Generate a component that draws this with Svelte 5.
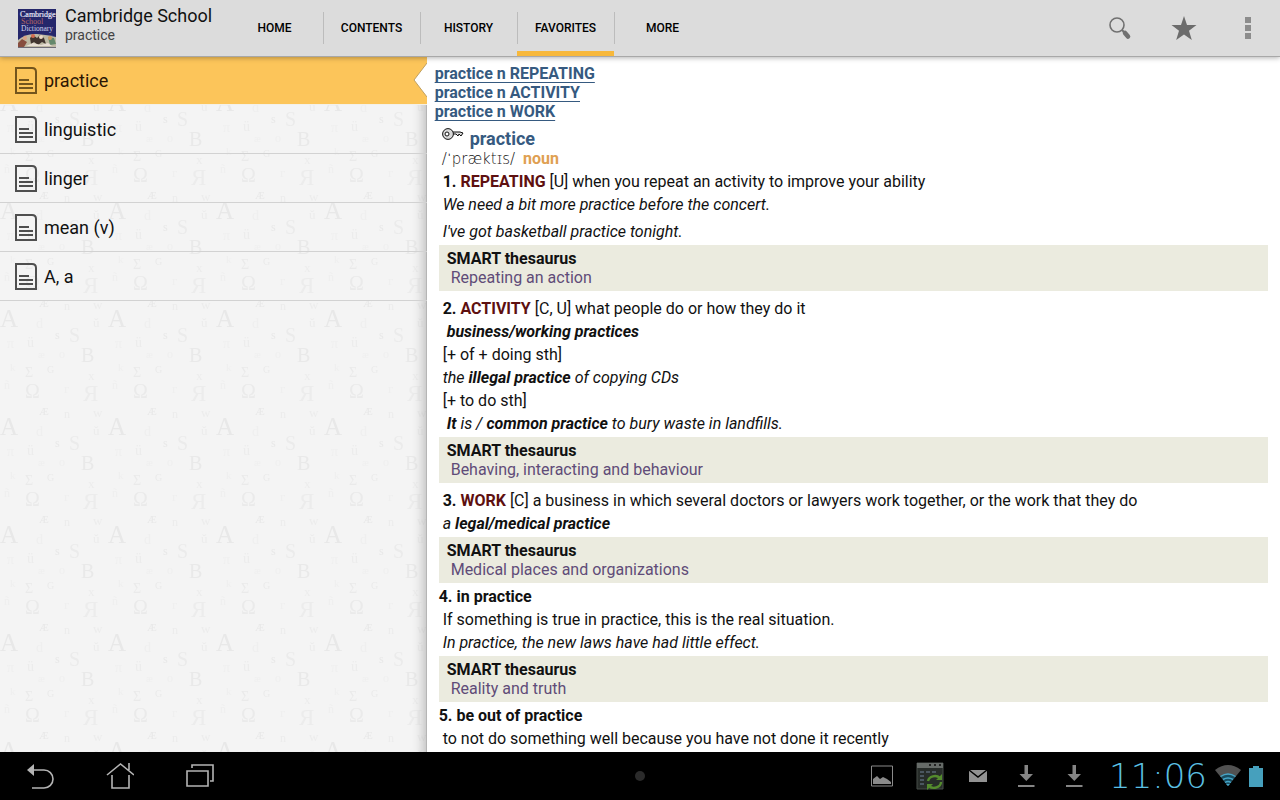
<script>
  const tabs = ['HOME', 'CONTENTS', 'HISTORY', 'FAVORITES', 'MORE'];
  const words = ['practice', 'linguistic', 'linger', 'mean (v)', 'A, a'];
  const sections = ['REPEATING', 'ACTIVITY', 'WORK'];
  let tab = $state('FAVORITES');
  let word = $state('practice');

  const glyphs = [
    ['A', 0, 27, 25, 0.05], ['S', 69, 42, 20, 0.035], ['B', 81, 62, 20, 0.045], ['Σ', 25, 77, 14, 0.04],
    ['Ω', 25, 98, 20, 0.04], ['Я', 83, 101, 23, 0.03], ['Æ', 39, 7, 11, 0.05], ['ü', 27, 47, 14, 0.03],
    ['s', 55, 39, 12, 0.05], ['G', 47, 73, 10, 0.04], ['w', 93, 9, 13, 0.03], ['ŭ', 93, 27, 13, 0.03],
    ['d', 36, 28, 14, 0.02], ['n', 64, 10, 12, 0.03], ['π', 7, 48, 14, 0.02], ['o', 59, 58, 12, 0.02],
    ['x', 88, 80, 13, 0.03], ['ñ', 4, 89, 12, 0.02], ['k', 10, 71, 11, 0.02], ['æ', 38, 58, 10, 0.02],
    ['г', 64, 93, 13, 0.02]
  ];
</script>

{#snippet thesaurus(topic)}
  <aside class="box">
    <h3>SMART thesaurus</h3>
    <a href="#topic">{topic}</a>
  </aside>
{/snippet}

<div class="page">
  <header>
    <div class="brand">
      <svg class="logo" viewBox="0 0 38 39" aria-hidden="true">
        <rect width="38" height="39" fill="#25276b" />
        <rect y="38" width="38" height="1" fill="#6f6b76" />
        <g font-family="Liberation Serif, serif">
          <text x="2" y="8" font-size="8" fill="#e4e4f4" stroke="#e4e4f4" stroke-width="0.2">Cambridge</text>
          <text x="3" y="15" font-size="8" fill="#b76560">School</text>
          <text x="3" y="22" font-size="7.5" fill="#d2d2ea">Dictionary</text>
        </g>
        <path d="M0 31Q8 24 19 25T38 28V38H0Z" fill="#bdb9a4" />
        <path d="M0 34l4-4 5 3-3 5H0z" fill="#874d3e" />
        <path d="M30 28l6 1 2 6-6 1z" fill="#64886c" />
        <path d="M12 29l3-3 4 3 3-3 4 3 2 6-4-2-4 3-4-3-3 2z" fill="#41342f" />
        <circle cx="7" cy="29" r="2" fill="#d9a184" /><circle cx="15" cy="27" r="2" fill="#d26b50" />
        <circle cx="23" cy="28" r="2" fill="#ecd9c2" /><circle cx="32" cy="29" r="2" fill="#cb9b62" />
        <path d="M8 37l7-3 8 2 7-2 4 3z" fill="#e8ded4" />
      </svg>
      <div>
        <h1>Cambridge School</h1>
        <p>practice</p>
      </div>
    </div>
    <nav class="tabs">
      {#each tabs as t}
        <button class:active={tab === t} onclick={() => (tab = t)}>{t}</button>
      {/each}
    </nav>
    <div class="actions">
      <button aria-label="Search">
        <svg viewBox="0 0 24 24"><circle cx="9" cy="9" r="7" fill="none" stroke="#707070" stroke-width="1.6" /><path d="M14 14l2 2" stroke="#707070" stroke-width="2" /><path d="M17 17l3 3.500" stroke="#707070" stroke-width="4.6" stroke-linecap="round" /></svg>
      </button>
      <button aria-label="Favorite">
        <svg class="star" viewBox="0 0 26 26"><path d="M13 1l3 9h9.500l-7.500 5.800 2.800 9.200-7.800-5.600L5.200 25 8 15.800.5 10H10z" fill="#6c6c6c" /></svg>
      </button>
      <button aria-label="More options">
        <svg viewBox="0 0 24 24"><path d="M9 1h6v6H9zM9 9h6v6H9zM9 17h6v6H9z" fill="#8c8c8c" /></svg>
      </button>
    </div>
  </header>

  <main>
    <section class="side" aria-label="Favorites">
      <svg class="paper" aria-hidden="true">
        <defs>
          <pattern id="letters" width="108" height="108" y="27" patternUnits="userSpaceOnUse">
            {#each glyphs as [g, x, y, size, alpha]}
              <text {x} {y} font-size={size} fill-opacity={alpha} font-family="Liberation Serif, serif">{g}</text>
            {/each}
          </pattern>
        </defs>
        <rect width="100%" height="100%" fill="url(#letters)" />
      </svg>
      <ul>
        {#each words as w}
          <li class:selected={word === w}>
            <button onclick={() => (word = w)}>
              <svg class="doc" viewBox="0 0 22 27" fill="none" stroke-width="2" aria-hidden="true"><path d="M1 1h16q4 0 4 4v21H1z" /><path d="M4 13h10M4 17h14M4 21h14" /></svg>
              {w}
            </button>
            {#if word === w}
              <svg class="notch" viewBox="0 0 14 34" aria-hidden="true"><path d="M14 0L1 17l13 17z" fill="#fff" /><path d="M14 0L1 17l13 17" fill="none" stroke="#bfa063" /></svg>
            {/if}
          </li>
        {/each}
      </ul>
    </section>

    <article>
      <nav class="links">
        {#each sections as s}
          <a href="#{s}">practice n {s}</a>
        {/each}
      </nav>
      <h2>
        <svg viewBox="0 0 22 14" aria-hidden="true"><path d="M10 5h8l3 1-2 3-2-2-1 2-2-2h-4" fill="#ddd" stroke="#111" stroke-width="1" /><circle cx="6" cy="7" r="5.400" fill="#d8d8d8" stroke="#111" /><circle cx="5" cy="7" r="2" fill="#fff" stroke="#111" /></svg>
        practice
      </h2>
      <p class="sound"><span>/ˈpræktɪs/</span> <b>noun</b></p>
      <p id="REPEATING"><b>1. <span class="sense">REPEATING</span></b> [U] when you repeat an activity to improve your ability</p>
      <p><i>We need a bit more practice before the concert.</i></p>
      <p class="spaced"><i>I've got basketball practice tonight.</i></p>
      {@render thesaurus('Repeating an action')}
      <p id="ACTIVITY" class="next"><b>2. <span class="sense">ACTIVITY</span></b> [C, U] what people do or how they do it</p>
      <p class="phrase"><i><b>business/working practices</b></i></p>
      <p>[+ of + doing sth]</p>
      <p><i>the <b>illegal practice</b> of copying CDs</i></p>
      <p>[+ to do sth]</p>
      <p class="phrase"><i><b>It</b> is / <b>common practice</b> to bury waste in landfills.</i></p>
      {@render thesaurus('Behaving, interacting and behaviour')}
      <p id="WORK" class="next"><b>3. <span class="sense">WORK</span></b> [C] a business in which several doctors or lawyers work together, or the work that they do</p>
      <p><i>a <b>legal/medical practice</b></i></p>
      {@render thesaurus('Medical places and organizations')}
      <h4>4. in practice</h4>
      <p>If something is true in practice, this is the real situation.</p>
      <p><i>In practice, the new laws have had little effect.</i></p>
      {@render thesaurus('Reality and truth')}
      <h4>5. be out of practice</h4>
      <p>to not do something well because you have not done it recently</p>
    </article>
  </main>

  <footer>
    <div class="keys">
      <button aria-label="Back"><svg viewBox="0 0 28 28"><path d="M7 8h11a8 8 0 0 1 0 18H6" fill="none" stroke="#b4b4b4" stroke-width="1.6" /><path d="M1 8l7-6v12z" fill="#b4b4b4" /></svg></button>
      <button aria-label="Home"><svg viewBox="0 0 28 28" fill="none" stroke="#b4b4b4" stroke-width="1.6"><path d="M1 13L14.500 2 28 13M6 13v13h17V13M23 8V1" /></svg></button>
      <button aria-label="Recent apps"><svg viewBox="0 0 28 28" fill="none" stroke="#b4b4b4" stroke-width="1.6"><path d="M1 9h21v15H1zM6 6V3h21v16h-3" /></svg></button>
    </div>
    <span class="dot"></span>
    <div class="status">
      <div class="notices">
        <svg viewBox="0 0 28 28"><path d="M3.500 4h21v20h-21z" fill="none" stroke="#8a8a8a" /><path d="M5 22v-5l4-3 3 3 3-2 4 2 4 3v2z" fill="#8a8a8a" /></svg>
        <svg viewBox="0 0 28 28"><path d="M1 1h26v26H1z" fill="#272c29" stroke="#464c48" /><path d="M1 1h26v5H1z" fill="#666b68" /><path d="M13 3h2M18 3h2M23 3h2" stroke="#222" stroke-width="2" /><path d="M4 10h4M10 10h4M16 10h4M4 14h4M4 18h4M4 22h4" stroke="#4b5660" stroke-width="2" /><path d="M12 19a7 6 0 0 1 12-3M25 20a7 6 0 0 1-12 4" fill="none" stroke="#548b2d" stroke-width="2.400" /><path d="M26 12v6h-6zM11 28v-6h6z" fill="#548b2d" /></svg>
        <svg viewBox="0 0 28 28"><path d="M5 8h18v12H5z" fill="#929292" /><path d="M5 8l9 7 9-7" fill="none" stroke="#000" stroke-width="1.500" /></svg>
        {#each [1, 2] as n (n)}
          <svg viewBox="0 0 28 28"><path d="M12.500 3h3.500v9h5l-6.700 7-6.800-7h5zM6 23h16.500v2H6z" fill="#858585" /></svg>
        {/each}
      </div>
      <time>11:06</time>
      <svg class="wifi" viewBox="0 0 26 22"><path d="M0 5Q13-5 26 5L13 21z" fill="#525252" /><path d="M6 12Q13 7 20 12L13 21z" fill="#174d61" /><path d="M5.500 11.500q7.500-5 15 0M8 14.500q5-3 10 0M10 17.500q3-2 6 0" fill="none" stroke="#45a5c8" stroke-width="1.500" /><path d="M11 19h4l-2 2z" fill="#45a5c8" /></svg>
      <svg class="battery" viewBox="0 0 14 21"><path d="M4 0h6v2h4v19H0V2h4z" fill="#46a0bd" /></svg>
    </div>
  </footer>
</div>

<style>
  :global(body) { margin: 0; }
  .page { height: 100vh; display: flex; flex-direction: column; overflow: hidden; background: #fff; color: #111; font: 16px/23px Roboto, sans-serif; }
  h1, h2, h3, h4, p, ul { margin: 0; padding: 0; font-weight: 400; }
  button { border: 0; padding: 0; background: none; color: inherit; font: inherit; cursor: pointer; }
  svg { display: block; flex: none; }

  header { flex: none; height: 57px; box-sizing: border-box; display: flex; background: #dcdcdc; border-bottom: 1px solid #a8a8a8; box-shadow: 0 1px 5px rgba(0, 0, 0, 0.3); position: relative; z-index: 2; }
  .brand { display: flex; align-items: center; gap: 9px; width: 226px; box-sizing: border-box; padding-left: 18px; }
  .logo { width: 38px; height: 39px; }
  h1 { font-size: 18px; line-height: 20px; white-space: nowrap; }
  .brand p { font-size: 14px; line-height: 18px; color: #444; padding-bottom: 12px; }
  .brand div { padding-top: 6px; }
  .tabs { display: flex; }
  .tabs button { position: relative; width: 97px; font-size: 12px; font-weight: 500; color: #000; border-bottom: 5px solid transparent; border-top: 5px solid transparent; box-sizing: border-box; }
  .tabs button + button::before { content: ''; position: absolute; left: 0; top: 7px; width: 1px; height: 32px; background: #bcbcbc; }
  .tabs button.active { border-bottom-color: #f7b83b; }
  .actions { margin-left: auto; display: flex; }
  .actions button { width: 64px; display: grid; place-items: center; }
  .actions svg { width: 24px; height: 24px; }
  .actions .star { width: 26px; height: 26px; }

  main { flex: 1; min-height: 0; display: grid; grid-template-columns: 1fr 2fr; }
  .side { position: relative; background: #f4f4f4; box-shadow: inset -1px 0 #b5b5b5, inset -13px 0 12px -10px rgba(0, 0, 0, 0.25); }
  .paper { position: absolute; inset: 0; width: 100%; height: 100%; }
  ul { position: relative; list-style: none; }
  li { position: relative; border-bottom: 1px solid #d2d2d2; }
  li button { width: 100%; height: 48px; display: flex; align-items: center; gap: 7px; padding-left: 15px; font-size: 18px; text-align: left; }
  li:first-child button { height: 47px; }
  .doc { width: 22px; height: 27px; stroke: #4f4f4f; }
  .selected { background: #fcc55a; border-bottom-color: #f4f1e8; color: #2b1604; }
  .selected .doc { stroke: #73551d; }
  .notch { position: absolute; right: 0; top: 6px; width: 14px; height: 34px; }

  article { overflow: hidden; padding: 7px 12px 0 8px; min-width: 0; }
  .links { display: flex; flex-direction: column; align-items: flex-start; }
  .links a { font-weight: 700; line-height: 19px; color: #365a80; text-decoration-thickness: 1px; text-underline-offset: 3px; }
  h2 { display: flex; gap: 6px; padding-left: 7px; font-size: 18px; line-height: 26px; font-weight: 700; color: #365a80; padding-top: 7px; height: 21px; align-items: center; }
  h2 svg { width: 22px; height: 14px; margin-bottom: 9px; }
  article p { padding-left: 8px; }
  article p.sound { padding-left: 7px; line-height: 19px; margin-bottom: 1px; }
  .sound span { font: 200 15px/19px "DejaVu Sans", sans-serif; }
  .sound b { color: #dfa052; margin-left: 4px; }
  .sense { color: #5e1010; }
  article p.phrase { padding-left: 12px; }
  article p.spaced { padding-top: 4px; }
  article p.next { padding-top: 4px; }
  .box { margin: 2px 0 2px 4px; padding: 4px 8px; line-height: 19px; background: #ebebdf; }
  h3 { font-size: 16px; line-height: 19px; font-weight: 700; }
  .box a { display: block; padding-left: 4px; color: #604c78; text-decoration: none; }
  h4 { font-size: 16px; font-weight: 700; padding-left: 4px; }

  footer { flex: none; height: 48px; display: grid; grid-template-columns: 1fr auto 1fr; align-items: center; background: #000; }
  .keys { display: flex; }
  .keys button { width: 80px; display: grid; place-items: center; }
  .keys svg { width: 28px; height: 28px; }
  .dot { width: 10px; height: 10px; border-radius: 50%; background: #2b2b2b; }
  .status { display: flex; align-items: center; justify-content: flex-end; gap: 8px; padding-right: 17px; }
  .notices { display: flex; gap: 20px; margin-right: 13px; }
  .notices svg { width: 28px; height: 28px; }
  time { font: 200 34px/40px "DejaVu Sans", sans-serif; color: #5bc0e4; }
  .wifi { width: 26px; height: 22px; }
  .battery { width: 14px; height: 21px; }
</style>
